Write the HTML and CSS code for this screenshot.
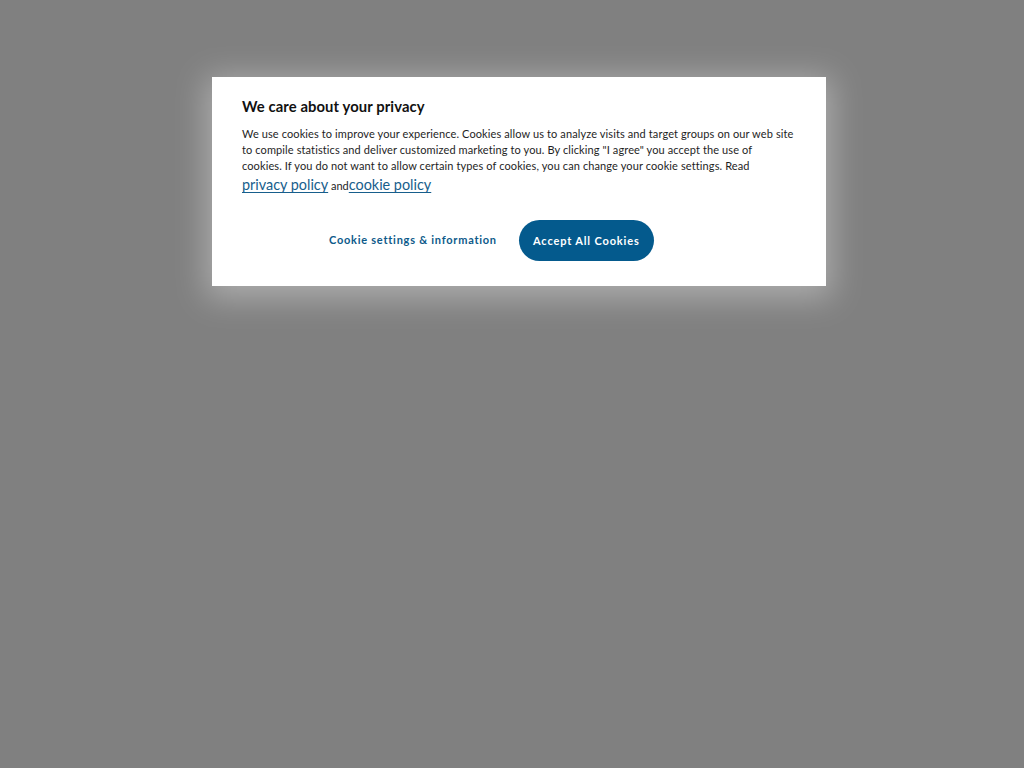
FILE: index.html
```html
<!DOCTYPE html>
<html lang="en">
<head>
<meta charset="utf-8">
<title>Cookie consent</title>
<link rel="stylesheet" href="styles.css">
</head>
<body>
<div class="overlay">
  <div class="dialog" role="dialog" aria-labelledby="cc-title">
    <h2 class="title" id="cc-title">We care about your privacy</h2>
    <p class="text">We use cookies to improve your experience. Cookies allow us to analyze visits and target groups on our web site<br>to compile statistics and deliver customized marketing to you. By clicking "I agree" you accept the use of<br>cookies. If you do not want to allow certain types of cookies, you can change your cookie settings. Read</p>
    <p class="links"><a href="#" class="link">privacy policy</a> and<a href="#" class="link">cookie policy</a></p>
    <div class="actions">
      <button class="btn-settings" type="button">Cookie settings &amp; information</button>
      <button class="btn-accept" type="button">Accept All Cookies</button>
    </div>
  </div>
</div>
</body>
</html>
```

FILE: styles.css
```css
html, body {
  margin: 0;
  padding: 0;
  height: 100%;
}
body {
  background: #808080;
  font-family: "Lato", "Noto Sans", sans-serif;
  color: #1a1a1a;
}
.overlay {
  display: flex;
  justify-content: center;
  padding-top: 77px;
  padding-left: 14px;
}
.dialog {
  width: 614px;
  box-sizing: border-box;
  background: #ffffff;
  padding: 20px 30px 25px 30px;
  box-shadow: 0 6px 30px 6px rgba(255, 255, 255, 0.35);
}
.title {
  margin: 0;
  font-size: 14.8px;
  font-weight: 700;
  line-height: 18px;
  color: #111;
  letter-spacing: 0.1px;
}
.text {
  margin: 11px 0 0 0;
  font-size: 11px;
  line-height: 16px;
  color: #1e1e1e;
  letter-spacing: 0.11px;
  white-space: nowrap;
}
.links {
  margin: 2px 0 0 0;
  font-size: 11px;
  line-height: 18px;
  color: #1e1e1e;
}
.link {
  font-size: 14.4px;
  color: #175e8c;
  text-decoration: underline;
  text-underline-offset: 2px;
}
.actions {
  display: flex;
  align-items: center;
  gap: 22px;
  margin-top: 25px;
  padding-left: 87px;
}
.btn-settings {
  border: 0;
  background: transparent;
  padding: 0;
  font-family: inherit;
  font-size: 11px;
  font-weight: 700;
  color: #0d5a8a;
  letter-spacing: 0.75px;
  cursor: pointer;
  margin-top: -2px;
}
.btn-accept {
  border: 0;
  background: #045a8d;
  color: #ffffff;
  font-family: inherit;
  font-size: 11px;
  font-weight: 700;
  letter-spacing: 0.85px;
  height: 41px;
  width: 135px;
  border-radius: 21px;
  cursor: pointer;
}
```
